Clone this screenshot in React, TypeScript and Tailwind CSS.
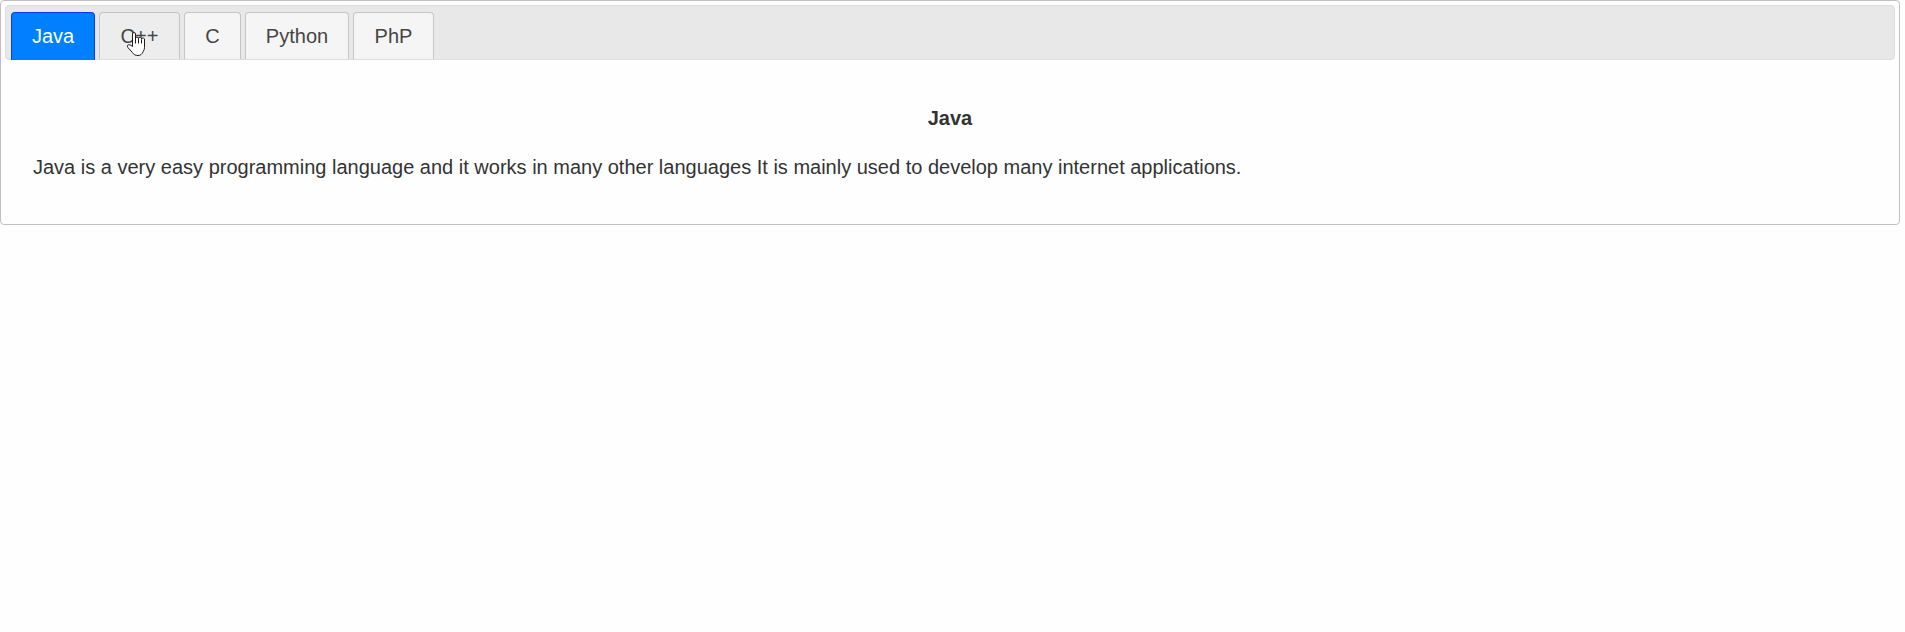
import { useState } from "react";

const tabs = [
  {
    name: "Java",
    width: "w-[84px]",
    text: "Java is a very easy programming language and it works in many other languages It is mainly used to develop many internet applications.",
  },
  { name: "C++", width: "w-[81px]", text: "" },
  { name: "C", width: "w-[57px]", text: "" },
  { name: "Python", width: "w-[104px]", text: "" },
  { name: "PhP", width: "w-[81px]", text: "" },
];

function HandCursor() {
  return (
    <svg
      className="pointer-events-none absolute left-[26px] top-[18px]"
      width="20"
      height="26"
      viewBox="0 0 20 26"
    >
      <path
        d="M6.500 15.500V3a1.500 1.500 0 0 1 3 0V7.500a1.500 1.500 0 0 1 3 0 1.500 1.500 0 0 1 3 .7 1.400 1.400 0 0 1 3 .8V16.500c0 1.500-.5 2.600-1.200 3.900-1.200 2.900-2.900 4.100-5.300 4.100-2.500 0-4.500-1-5.700-3.100L2 16.600c-.6-1-.8-1.700-.5-2.300.6-.8 2.300-.7 3.300.1z"
        fill="#fff"
        stroke="#1c1c1c"
        strokeWidth="1"
        strokeLinejoin="round"
      />
      <path d="M9.500 7v5.500M12.500 7.500v5M15.500 8.500v4" stroke="#1c1c1c" strokeWidth="1" />
    </svg>
  );
}

export default function App() {
  const [active, setActive] = useState(0);
  return (
    <div className="min-h-screen bg-[#fefefe] font-['Liberation_Sans',Arial,sans-serif] text-[20px] leading-[23px] text-[#333333]">
      <div className="h-[225px] w-[1900px] rounded-[4px] border border-[#c0c0c0] p-1">
        <div
          role="tablist"
          className="flex h-[55px] items-end gap-1 rounded-[4px] border border-[#dddddd] bg-[#e8e8e8] pl-[5px]"
        >
          {tabs.map((tab, i) => (
            <button
              key={tab.name}
              role="tab"
              aria-selected={i === active}
              onClick={() => setActive(i)}
              className={
                "relative shrink-0 whitespace-nowrap rounded-t-[4px] border border-b-0 text-center " +
                tab.width +
                " " +
                (i === active
                  ? "-mb-px h-[48px] border-[#003eff] bg-[#007fff] pb-[1px] text-white"
                  : i === 1
                    ? "h-[47px] border-[#c5c5c5] bg-[#ededed] text-[#454545]"
                    : "h-[47px] border-[#c5c5c5] bg-[#f5f5f5] text-[#454545]")
              }
            >
              {tab.name}
              {i === 1 && <HandCursor />}
            </button>
          ))}
        </div>
        <div className="px-7 pt-[47px]">
          <h3 className="text-center font-bold">{tabs[active].name}</h3>
          <p className="mt-[26px]">{tabs[active].text}</p>
        </div>
      </div>
    </div>
  );
}
